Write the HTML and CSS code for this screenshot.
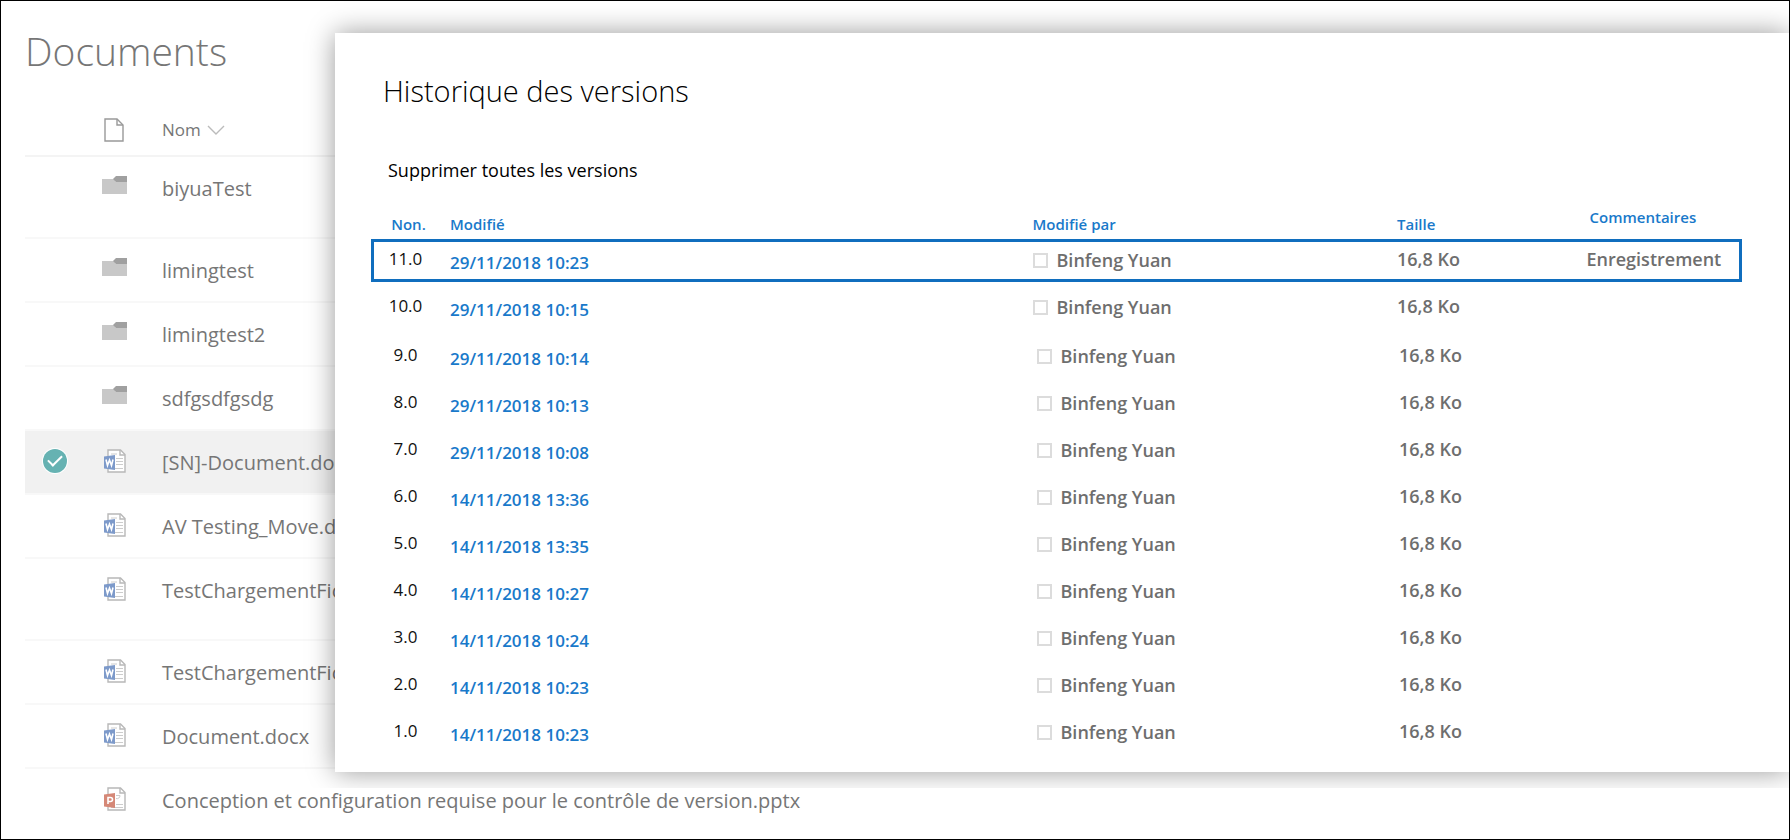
FILE: index.html
```html
<!DOCTYPE html>
<html lang="fr">
<head>
<meta charset="utf-8">
<title>Documents</title>
<link rel="stylesheet" href="styles.css">
</head>
<body>
<svg class="sprites" aria-hidden="true">
  <symbol id="folder" viewBox="0 0 25 18">
    <path d="M0 3h12l2 3h11v12H0z" fill="#c8c8c8"/>
    <path d="M11 3l3-3h11v6H14z" fill="#a0a0a0"/>
  </symbol>
  <symbol id="page" viewBox="0 0 20 24">
    <path d="M1 1h12l6 6v16H1z" fill="#fff" stroke="#999" stroke-width="1.4"/>
    <path d="M13 1v6h6" fill="none" stroke="#999" stroke-width="1.4"/>
  </symbol>
  <symbol id="sheet" viewBox="0 0 22 24">
    <path d="M4 1h12.500l4.500 4.500V23H4z" fill="#fff" stroke="#b8b8b8" stroke-width="1.400"/>
    <path d="M16 1v5h5" fill="none" stroke="#b8b8b8" stroke-width="1.400"/>
  </symbol>
  <symbol id="word" viewBox="0 0 22 24">
    <use href="#sheet"/>
    <path d="M7 5h6M12 9.500h7M12 12.500h7M12 15.500h7M7 19.500h12" stroke="#ccc"/>
    <path d="M0 7.500L11 6v15L0 19.500z" fill="#7d9aca"/>
    <path d="M2 10.500l1.500 6 2-5.500 2 5.500 1.500-6" fill="none" stroke="#fff" stroke-width="1.600"/>
  </symbol>
  <symbol id="powerpoint" viewBox="0 0 22 24">
    <use href="#sheet"/>
    <path d="M12 11.500a3 3 0 0 0 4-3h-4M12 17.500h7M7 20.500h12" fill="none" stroke="#ccc"/>
    <path d="M0 7.500L11 6v15L0 19.500z" fill="#d58877"/>
    <path d="M4 17v-6.500h2.500a1.700 1.700 0 0 1 0 4H4" fill="none" stroke="#fff" stroke-width="1.600"/>
  </symbol>
</svg>
<main class="library">
  <h1 class="library-title">Documents</h1>
  <table class="files">
    <colgroup><col class="col-check"><col class="col-icon"><col></colgroup>
    <thead>
      <tr>
        <th></th>
        <th><svg class="page-icon" role="img" aria-label="Type"><use href="#page"/></svg></th>
        <th><button class="sort" type="button">Nom<svg class="chevron" viewBox="0 0 18 10" aria-hidden="true"><path d="M1 1l8 8 8-8"/></svg></button></th>
      </tr>
    </thead>
    <tbody>
      <tr class="tall"><td></td><td><svg class="folder-icon"><use href="#folder"/></svg></td><td>biyuaTest</td></tr>
      <tr><td></td><td><svg class="folder-icon"><use href="#folder"/></svg></td><td>limingtest</td></tr>
      <tr><td></td><td><svg class="folder-icon"><use href="#folder"/></svg></td><td>limingtest2</td></tr>
      <tr><td></td><td><svg class="folder-icon"><use href="#folder"/></svg></td><td>sdfgsdfgsdg</td></tr>
      <tr class="selected"><td><input class="check" type="checkbox" checked aria-label="Sélectionner"></td><td><svg class="file-icon"><use href="#word"/></svg></td><td>[SN]-Document.doc</td></tr>
      <tr><td></td><td><svg class="file-icon"><use href="#word"/></svg></td><td>AV Testing_Move.do</td></tr>
      <tr class="tall"><td></td><td><svg class="file-icon"><use href="#word"/></svg></td><td>TestChargementFic</td></tr>
      <tr><td></td><td><svg class="file-icon"><use href="#word"/></svg></td><td>TestChargementFic</td></tr>
      <tr><td></td><td><svg class="file-icon"><use href="#word"/></svg></td><td>Document.docx</td></tr>
      <tr><td></td><td><svg class="file-icon"><use href="#powerpoint"/></svg></td><td>Conception et configuration requise pour le contrôle de version.pptx</td></tr>
    </tbody>
  </table>
</main>
<section class="history" role="dialog" aria-labelledby="history-title">
  <h2 class="history-title" id="history-title">Historique des versions</h2>
  <button class="delete-all" type="button">Supprimer toutes les versions</button>
  <table class="versions">
    <colgroup><col class="col-number"><col class="col-date"><col class="col-author"><col class="col-size"><col></colgroup>
    <thead>
      <tr><th class="number">Non.</th><th class="date">Modifié</th><th class="author">Modifié par</th><th class="size">Taille</th><th class="comment">Commentaires</th></tr>
    </thead>
    <tbody class="recent">
      <tr class="current"><td class="number">11.0</td><td class="date"><a href="#v11">29/11/2018 10:23</a></td><td class="author"><label><input type="checkbox">Binfeng Yuan</label></td><td class="size">16,8 Ko</td><td class="comment">Enregistrement</td></tr>
      <tr><td class="number">10.0</td><td class="date"><a href="#v10">29/11/2018 10:15</a></td><td class="author"><label><input type="checkbox">Binfeng Yuan</label></td><td class="size">16,8 Ko</td><td></td></tr>
    </tbody>
    <tbody class="older">
      <tr><td class="number">9.0</td><td class="date"><a href="#v9">29/11/2018 10:14</a></td><td class="author"><label><input type="checkbox">Binfeng Yuan</label></td><td class="size">16,8 Ko</td><td></td></tr>
      <tr><td class="number">8.0</td><td class="date"><a href="#v8">29/11/2018 10:13</a></td><td class="author"><label><input type="checkbox">Binfeng Yuan</label></td><td class="size">16,8 Ko</td><td></td></tr>
      <tr><td class="number">7.0</td><td class="date"><a href="#v7">29/11/2018 10:08</a></td><td class="author"><label><input type="checkbox">Binfeng Yuan</label></td><td class="size">16,8 Ko</td><td></td></tr>
      <tr><td class="number">6.0</td><td class="date"><a href="#v6">14/11/2018 13:36</a></td><td class="author"><label><input type="checkbox">Binfeng Yuan</label></td><td class="size">16,8 Ko</td><td></td></tr>
      <tr><td class="number">5.0</td><td class="date"><a href="#v5">14/11/2018 13:35</a></td><td class="author"><label><input type="checkbox">Binfeng Yuan</label></td><td class="size">16,8 Ko</td><td></td></tr>
      <tr><td class="number">4.0</td><td class="date"><a href="#v4">14/11/2018 10:27</a></td><td class="author"><label><input type="checkbox">Binfeng Yuan</label></td><td class="size">16,8 Ko</td><td></td></tr>
      <tr><td class="number">3.0</td><td class="date"><a href="#v3">14/11/2018 10:24</a></td><td class="author"><label><input type="checkbox">Binfeng Yuan</label></td><td class="size">16,8 Ko</td><td></td></tr>
      <tr><td class="number">2.0</td><td class="date"><a href="#v2">14/11/2018 10:23</a></td><td class="author"><label><input type="checkbox">Binfeng Yuan</label></td><td class="size">16,8 Ko</td><td></td></tr>
      <tr><td class="number">1.0</td><td class="date"><a href="#v1">14/11/2018 10:23</a></td><td class="author"><label><input type="checkbox">Binfeng Yuan</label></td><td class="size">16,8 Ko</td><td></td></tr>
    </tbody>
  </table>
</section>
</body>
</html>
```
FILE: styles.css
```css
* { box-sizing: border-box; }

body {
  position: relative;
  margin: 0;
  min-height: 100vh;
  border: 1px solid #000;
  background: #fff;
  font-family: "Open Sans", "Noto Sans", sans-serif;
  overflow: hidden;
}

button {
  padding: 0;
  border: 0;
  background: none;
  font: inherit;
  color: inherit;
  cursor: pointer;
}

svg { display: block; }
.sprites { position: absolute; width: 0; height: 0; }

/* Document library */
.library { padding: 22px 0 0 24px; color: #767676; }
.library-title {
  margin: 0 0 2px;
  font-size: 39px;
  line-height: 56px;
  font-weight: 300;
}

.files {
  width: 100%;
  table-layout: fixed;
  border-collapse: separate;
  border-spacing: 0;
  font-size: 20px;
  line-height: 28px;
}
.col-check { width: 77px; }
.col-icon { width: 60px; }
.files th {
  height: 76px;
  padding: 35px 0 0;
  border-bottom: 2px solid #f4f4f4;
  vertical-align: top;
  text-align: left;
  font-size: 17px;
  font-weight: 400;
}
.files td {
  height: 64px;
  padding: 18px 0 0;
  border-bottom: 2px solid #f8f8f8;
  vertical-align: top;
  white-space: nowrap;
}
.files .tall td { height: 82px; }
.files .selected td { background: #f1f1f1; }
.files tbody tr:last-child td { border-bottom: 0; }

.page-icon { width: 20px; height: 24px; margin: 2px 0 0 2px; }
.folder-icon { width: 25px; height: 18px; margin-top: 1px; }
.file-icon { width: 22px; height: 24px; margin-left: 2px; }
.sort { display: flex; align-items: center; gap: 6px; }
.chevron {
  width: 18px;
  height: 10px;
  fill: none;
  stroke: #bbb;
  stroke-width: 1.4;
}

.check {
  display: grid;
  place-items: center;
  appearance: none;
  width: 24px;
  height: 24px;
  margin: 0 0 0 18px;
  border-radius: 50%;
  background: #66b2b2;
  box-shadow: 0 0 0 1px #fff;
}
.check::after {
  content: "";
  width: 12px;
  height: 6px;
  margin-bottom: 4px;
  border: solid #fff;
  border-width: 0 0 2px 2px;
  transform: rotate(-45deg);
}

/* Version history panel, over the library */
.history {
  position: absolute;
  top: 32px;
  right: 0;
  left: 334px;
  padding: 36px 45px 16px 34px;
  background: #fff;
  box-shadow: 0 0 26px rgba(0, 0, 0, 0.4);
  clip-path: inset(-32px 0 -16px -32px);
}
.history-title {
  margin: 0 0 43px 14px;
  font-size: 29px;
  line-height: 44px;
  font-weight: 300;
}
.delete-all {
  display: block;
  margin: 0 0 14px 19px;
  font-size: 18px;
  line-height: 28px;
}

.versions {
  width: 100%;
  table-layout: fixed;
  border-collapse: separate;
  border-spacing: 0;
  font-size: 18px;
  line-height: 24px;
  font-weight: 600;
  color: #6e6e6e;
}
.col-number { width: 81px; }
.col-date { width: 42%; }
.col-author { width: 26%; }
.col-size { width: 14%; }
.versions th {
  height: 39px;
  padding: 14px 0 0;
  vertical-align: top;
  text-align: left;
  font-size: 15px;
  font-weight: 600;
  color: #1979ca;
}
.versions td { height: 47px; padding: 10px 0 0; vertical-align: top; }
.versions .number { padding-right: 8px; text-align: center; }
.versions th.number { padding-right: 2px; }
.versions td.number {
  font-size: 17px;
  font-weight: 400;
  color: #111;
}
.versions td.date { padding-top: 14px; font-size: 17px; }
.versions .author { padding-left: 5px; }
.versions td.author { padding-top: 11px; }
.versions .size { padding-left: 12px; }
.versions .comment { padding-left: 9px; }
.versions th.comment { padding: 7px 0 0 12px; }
.versions a { color: #1979ca; text-decoration: none; }
.versions label { display: flex; align-items: center; gap: 9px; }
.versions input {
  appearance: none;
  width: 15px;
  height: 15px;
  margin: 0;
  border: 2px solid #dcdcdc;
}
.versions .current { outline: 3px solid #106ebe; outline-offset: -5px; }
.recent tr:last-child td { height: 49px; }
.versions .older .author { padding-left: 9px; }
.versions .older .size { padding-left: 14px; }
```
